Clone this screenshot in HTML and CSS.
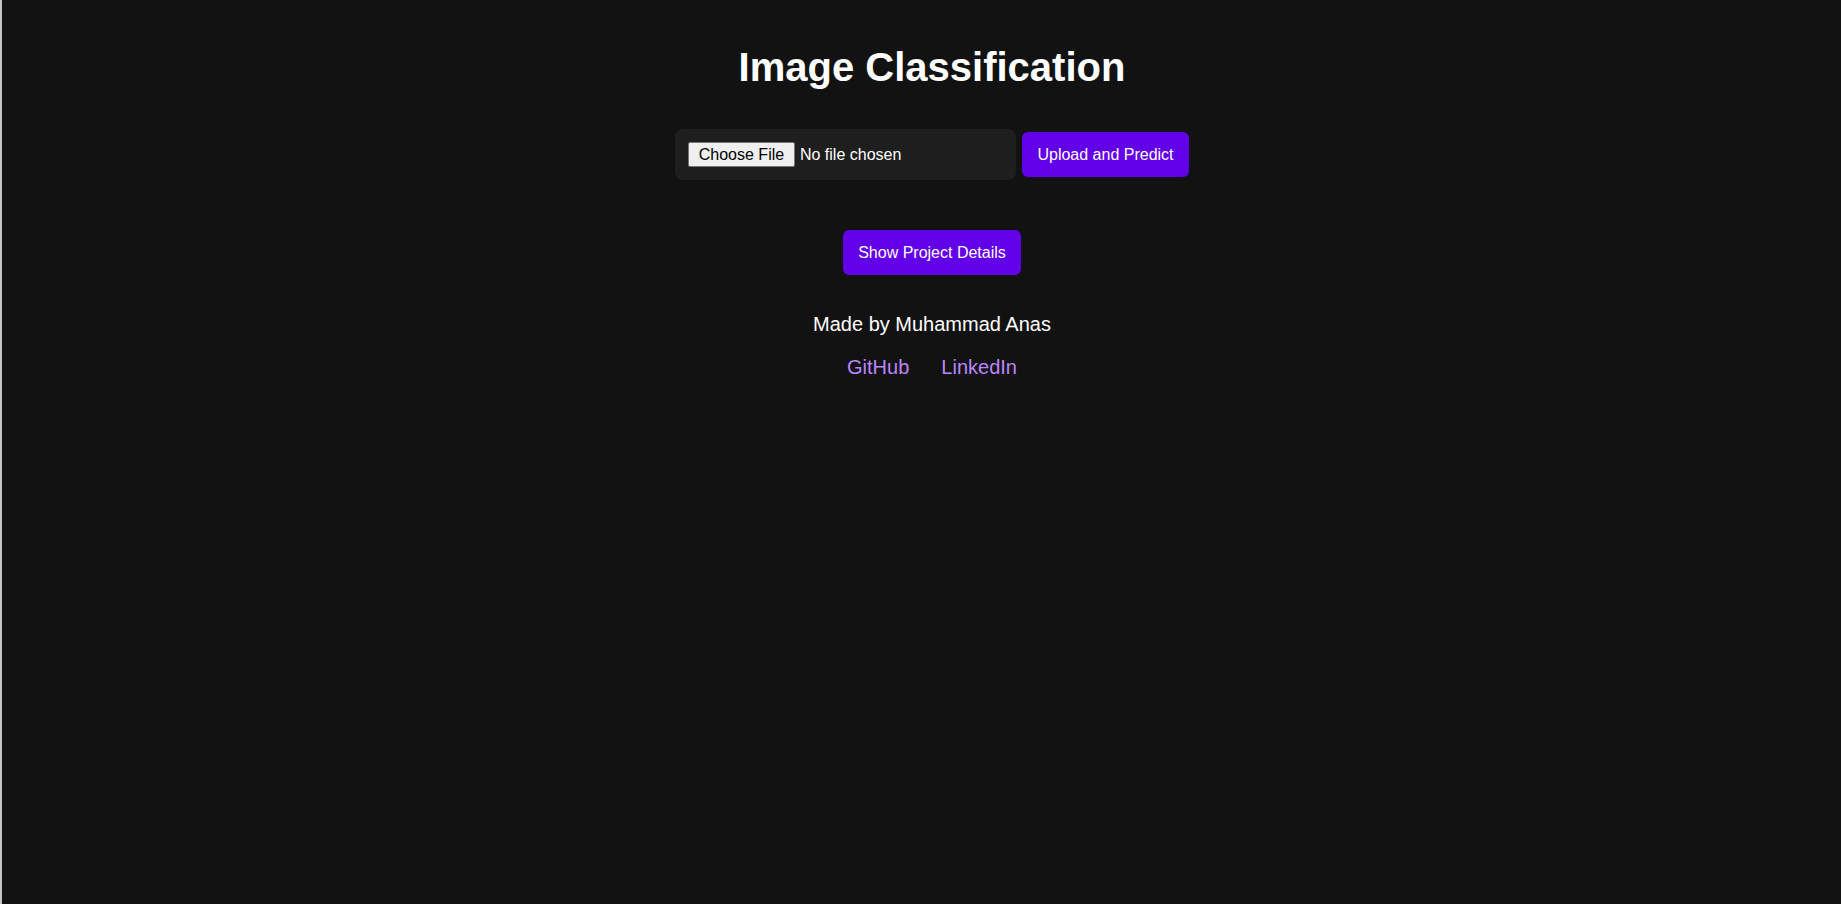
FILE: index.html
```html
<!DOCTYPE html>
<html lang="en">
<head>
<meta charset="utf-8">
<title>Image Classification</title>
<link rel="stylesheet" href="styles.css">
</head>
<body>
<main class="page">
  <h1 class="title">Image Classification</h1>
  <form class="upload-form">
    <div class="file-box">
      <input class="file-input" type="file" accept="image/*">
    </div>
    <button class="btn btn-upload" type="button">Upload and Predict</button>
  </form>
  <section class="details">
    <button class="btn btn-details" type="button">Show Project Details</button>
    <p class="credit">Made by Muhammad Anas</p>
    <nav class="links">
      <a class="link" href="#">GitHub</a>
      <a class="link" href="#">LinkedIn</a>
    </nav>
  </section>
</main>
</body>
</html>
```

FILE: styles.css
```css
html {
  background: #121212;
  border-left: 2px solid #c4c4c4;
  min-height: 100%;
}
body {
  margin: 0;
  background: #121212;
  color: #ffffff;
  font-family: "Liberation Sans", Arial, sans-serif;
  min-height: 904px;
}
.page {
  display: flex;
  flex-direction: column;
  align-items: center;
  padding-left: 21px;
}
.title {
  font-size: 40px;
  font-weight: bold;
  line-height: 46px;
  margin: 44px 0 39px;
}
.upload-form {
  display: flex;
  align-items: center;
  gap: 6px;
}
.file-box {
  background: #1e1e1e;
  border-radius: 8px;
  width: 341px;
  height: 51px;
  box-sizing: border-box;
  padding: 0 13px;
  display: flex;
  align-items: center;
}
.file-input {
  font-family: "Liberation Sans", Arial, sans-serif;
  font-size: 16px;
  color: #ffffff;
}
.file-input::file-selector-button {
  font-family: "Liberation Sans", Arial, sans-serif;
  font-size: 16px;
  color: #000000;
  background: #efefef;
  border: 1px solid #767676;
  border-radius: 2px;
  width: 107px;
  height: 25px;
  padding: 0;
  margin: 0 5px 0 0;
}
.btn {
  font-family: "Liberation Sans", Arial, sans-serif;
  font-size: 16px;
  color: #ffffff;
  background: #6200ea;
  border: none;
  border-radius: 6px;
  height: 45px;
  cursor: pointer;
}
.btn-upload {
  padding: 0 15.5px;
}
.details {
  display: flex;
  flex-direction: column;
  align-items: center;
  margin-top: 50px;
}
.btn-details {
  padding: 0 15px;
}
.credit {
  font-size: 20px;
  line-height: 23px;
  margin: 38px 0 20px;
}
.links {
  display: flex;
  gap: 32px;
  font-size: 20px;
  line-height: 23px;
}
.link {
  color: #bb86fc;
  text-decoration: none;
}
```
